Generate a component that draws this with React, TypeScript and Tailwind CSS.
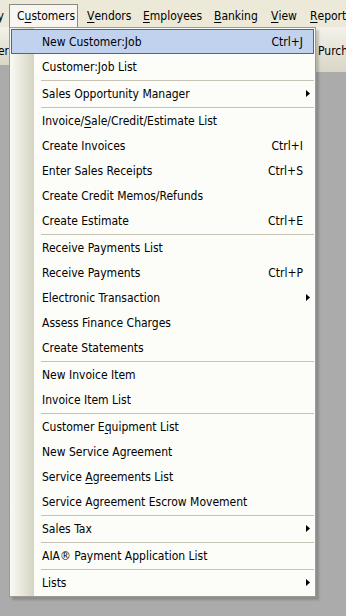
import React from 'react';

type Entry = { label: string; shortcut?: string; sub?: boolean; active?: boolean } | 'sep';

// '&' marks the mnemonic letter
const entries: Entry[] = [
  { label: 'New Customer:Job', shortcut: 'Ctrl+J', active: true },
  { label: 'Customer:Job List' },
  'sep',
  { label: 'Sales Opportunity Manager', sub: true },
  'sep',
  { label: 'Invoice/&Sale/Credit/Estimate List' },
  { label: 'Create Invoices', shortcut: 'Ctrl+I' },
  { label: 'Enter Sales Receipts', shortcut: 'Ctrl+S' },
  { label: 'Create Credit Memos/Refunds' },
  { label: 'Create Estimate', shortcut: 'Ctrl+E' },
  'sep',
  { label: 'Receive Payments List' },
  { label: 'Receive Payments', shortcut: 'Ctrl+P' },
  { label: 'Electronic Transaction', sub: true },
  { label: 'Assess Finance Charges' },
  { label: 'Create Statements' },
  'sep',
  { label: 'New Invoice Item' },
  { label: 'Invoice Item List' },
  'sep',
  { label: 'Customer E&quipment List' },
  { label: 'New Service Agreement' },
  { label: 'Service &Agreements List' },
  { label: 'Service Agreement Escrow Movement' },
  'sep',
  { label: 'Sales Tax', sub: true },
  'sep',
  { label: 'AIA® Payment Application List' },
  'sep',
  { label: 'Lists', sub: true },
];

const Label: React.FC<{ text: string }> = ({ text }) => {
  const i = text.indexOf('&');
  if (i < 0) return <>{text}</>;
  return (
    <>
      {text.slice(0, i)}
      <span className="underline underline-offset-2">{text[i + 1]}</span>
      {text.slice(i + 2)}
    </>
  );
};

const bar = [
  { label: '&Vendors', w: 'w-[58px] pl-[9px]' },
  { label: '&Employees', w: 'w-[71px] pl-[7px]' },
  { label: '&Banking', w: 'w-[57px] pl-[7px]' },
  { label: '&View', w: 'w-[39px] pl-[7px]' },
  { label: '&Reports', w: 'w-[60px] pl-[7px]' },
];

export default function App() {
  return (
    <div className="w-[346px] h-[616px] relative overflow-hidden bg-[#ababab] text-[12px] text-black font-['DejaVu_Sans_Condensed','DejaVu_Sans',sans-serif]">
      {/* menu bar */}
      <div className="h-[27px] bg-[#ece9d8] flex items-start whitespace-nowrap overflow-hidden">
        <div className="w-[9px] shrink-0 h-[22px] mt-[5px] overflow-hidden flex items-center justify-end pr-[5px]">
          <span className="shrink-0">Company</span>
        </div>
        <div className="relative z-20 shrink-0 w-[69px] h-[23px] mt-[4px] border-l border-t border-r border-[#8c8a80] bg-[#f7f6f0] flex items-center pl-[7px] pb-px">
          C<span className="underline underline-offset-2">u</span>stomers
        </div>
        {bar.map((b) => (
          <div key={b.label} className={`${b.w} h-[22px] mt-[5px] flex items-center shrink-0`}>
            <Label text={b.label} />
          </div>
        ))}
      </div>

      {/* toolbar strip behind the menu */}
      <div className="h-[45px] flex items-start whitespace-nowrap">
        <div className="w-[9px] shrink-0 h-[38px] overflow-hidden flex justify-end items-start pt-[15px] bg-[linear-gradient(to_bottom,#f3f2ea,#d9d6c6)]">
          <span className="shrink-0">Customer</span>
        </div>
        <div className="flex-1" />
        <div className="w-[46px] shrink-0 h-[45px] overflow-hidden pl-[18px] pt-[15px] bg-[linear-gradient(to_bottom,#f3f2ea,#d9d6c6)]">
          <span>Purchase Orders</span>
        </div>
      </div>

      {/* dropdown */}
      <div className="absolute z-10 left-[9px] top-[27px] w-[307px] border border-[#9c9a92] p-px bg-[linear-gradient(to_right,#fafaf5_0px,#d5d3c1_24px,#fcfcf8_24px)] shadow-[3px_3px_2px_rgba(0,0,0,0.18)]">
        {entries.map((e, idx) =>
          e === 'sep' ? (
            <div key={idx} className="h-[2px] ml-[30px] border-b border-[#c6c3b5]" />
          ) : (
            <div
              key={idx}
              className={`h-[25px] flex items-center pl-[30px] border ${
                e.active ? 'bg-[#c1d2ee] border-[#316ac5]' : 'border-transparent'
              }`}
            >
              <span className="flex-1 whitespace-nowrap">
                <Label text={e.label} />
              </span>
              {e.shortcut && <span className="mr-[10px]">{e.shortcut}</span>}
              {e.sub && (
                <svg width="4" height="7" viewBox="0 0 4 7" className="mr-[3px]">
                  <path d="M0 0L4 3.5L0 7Z" fill="#000" />
                </svg>
              )}
            </div>
          )
        )}
      </div>
    </div>
  );
}
